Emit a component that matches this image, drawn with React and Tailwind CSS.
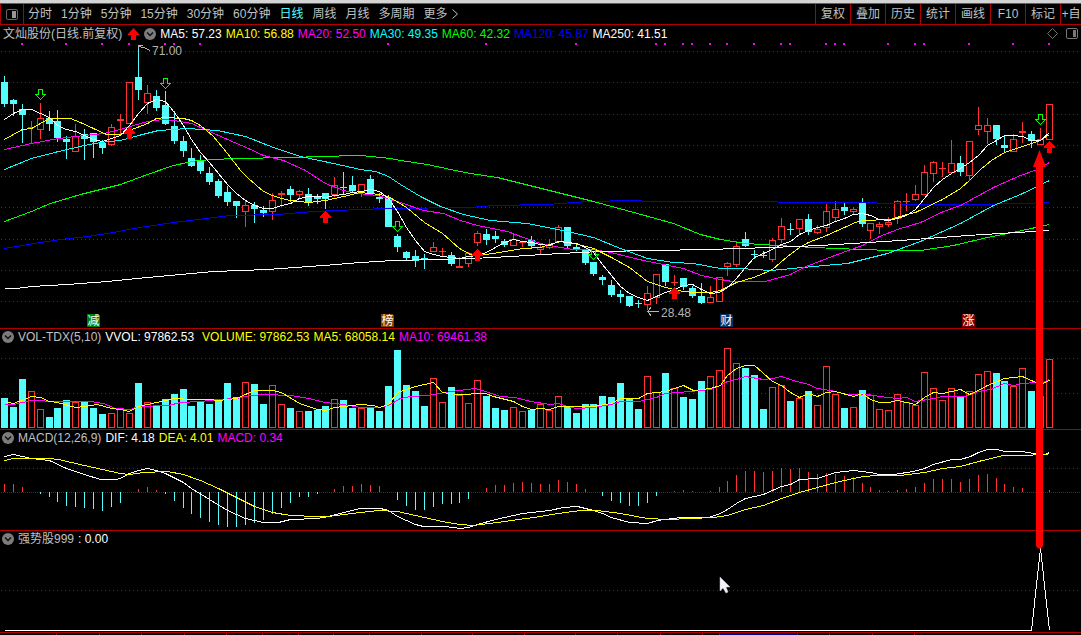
import React, { useState } from "react";
import clsx from "clsx";

const RED = "#ff3232";
const CYAN = "#54fcfc";
const GRID = "#b00000";

// x of the middle of candle i
const xAt = (i) => 4 + Math.floor(i * 8.9341 + 0.332);

// [up/down, high, body top, body bottom, low, top of the volume bar]
const candles = [
  ["d", 76, 82, 104, 107, 398],
  ["d", 99, 100, 104, 116, 407],
  ["d", 104, 109, 115, 143, 379],
  ["u", 121, 127, 128, 143, 391],
  ["u", 103, 118, 130, 139, 409],
  ["d", 111, 118, 124, 131, 417],
  ["d", 110, 121, 138, 142, 408],
  ["d", 136, 139, 142, 159, 400],
  ["u", 124, 136, 152, 152, 402],
  ["d", 129, 134, 139, 160, 402],
  ["d", 133, 133, 142, 158, 408],
  ["d", 140, 143, 148, 154, 414],
  ["u", 124, 127, 145, 146, 413],
  ["u", 114, 119, 121, 135, 408],
  ["u", 82, 82, 124, 124, 413],
  ["d", 45, 77, 90, 100, 383],
  ["u", 85, 93, 103, 114, 402],
  ["d", 90, 96, 108, 111, 405],
  ["d", 91, 105, 124, 125, 399],
  ["d", 111, 126, 141, 144, 394],
  ["d", 136, 141, 151, 157, 389],
  ["d", 148, 158, 166, 167, 406],
  ["d", 155, 160, 171, 174, 402],
  ["d", 167, 173, 182, 185, 404],
  ["d", 179, 181, 196, 198, 400],
  ["d", 186, 192, 202, 206, 383],
  ["d", 201, 201, 206, 218, 397],
  ["u", 201, 205, 212, 227, 382],
  ["d", 202, 205, 209, 223, 384],
  ["d", 206, 210, 213, 217, 404],
  ["u", 193, 200, 212, 220, 385],
  ["u", 191, 193, 195, 207, 404],
  ["d", 186, 189, 195, 202, 408],
  ["u", 190, 191, 195, 198, 411],
  ["d", 188, 194, 202, 206, 411],
  ["d", 194, 197, 199, 204, 410],
  ["d", 193, 193, 199, 209, 406],
  ["u", 177, 185, 195, 197, 399],
  ["d", 172, 187, 188, 194, 400],
  ["d", 176, 185, 191, 192, 408],
  ["u", 184, 184, 192, 197, 408],
  ["d", 175, 179, 194, 195, 408],
  ["d", 193, 197, 199, 203, 411],
  ["d", 195, 198, 227, 227, 386],
  ["d", 234, 236, 247, 252, 350],
  ["d", 251, 252, 258, 261, 385],
  ["d", 250, 256, 261, 267, 391],
  ["d", 254, 258, 259, 269, 406],
  ["u", 242, 247, 252, 252, 378],
  ["u", 248, 251, 252, 257, 402],
  ["d", 252, 255, 264, 266, 387],
  ["u", 257, 266, 268, 268, 395],
  ["u", 252, 253, 264, 267, 403],
  ["u", 231, 233, 243, 246, 380],
  ["d", 229, 234, 240, 245, 396],
  ["d", 231, 236, 239, 243, 408],
  ["d", 239, 241, 245, 247, 410],
  ["u", 234, 239, 246, 246, 407],
  ["u", 241, 242, 243, 247, 411],
  ["d", 236, 240, 246, 248, 410],
  ["u", 245, 247, 250, 254, 404],
  ["u", 239, 245, 248, 249, 410],
  ["u", 225, 227, 242, 242, 396],
  ["d", 227, 227, 246, 248, 406],
  ["d", 244, 247, 250, 251, 413],
  ["d", 249, 250, 263, 265, 404],
  ["d", 262, 262, 274, 276, 404],
  ["d", 275, 277, 280, 285, 396],
  ["d", 280, 285, 295, 297, 397],
  ["d", 290, 294, 297, 303, 383],
  ["d", 296, 296, 306, 307, 399],
  ["d", 300, 303, 304, 308, 409],
  ["u", 286, 293, 305, 310, 376],
  ["u", 274, 274, 298, 304, 392],
  ["d", 264, 264, 282, 286, 373],
  ["u", 275, 282, 283, 286, 388],
  ["d", 278, 278, 287, 290, 397],
  ["d", 286, 288, 296, 298, 399],
  ["d", 283, 296, 303, 304, 381],
  ["u", 286, 297, 303, 303, 376],
  ["u", 277, 277, 302, 302, 370],
  ["u", 262, 263, 267, 276, 348],
  ["u", 241, 246, 265, 267, 363],
  ["d", 232, 239, 246, 247, 368],
  ["d", 250, 254, 255, 259, 375],
  ["d", 251, 255, 256, 258, 409],
  ["u", 238, 240, 260, 262, 387],
  ["u", 218, 226, 240, 243, 385],
  ["d", 223, 229, 230, 235, 401],
  ["u", 219, 219, 229, 235, 398],
  ["d", 214, 219, 232, 235, 391],
  ["u", 225, 229, 233, 234, 405],
  ["u", 204, 211, 228, 232, 366],
  ["u", 201, 209, 218, 222, 394],
  ["d", 203, 207, 211, 215, 408],
  ["u", 207, 209, 212, 215, 407],
  ["d", 198, 203, 224, 227, 390],
  ["u", 223, 223, 231, 239, 395],
  ["u", 222, 224, 227, 234, 409],
  ["u", 217, 222, 225, 227, 410],
  ["u", 200, 201, 219, 224, 394],
  ["u", 193, 201, 202, 211, 402],
  ["u", 185, 194, 200, 201, 405],
  ["u", 165, 172, 195, 195, 372],
  ["u", 161, 162, 174, 182, 388],
  ["u", 162, 168, 169, 177, 400],
  ["u", 140, 163, 173, 173, 388],
  ["d", 156, 163, 172, 176, 396],
  ["u", 141, 141, 176, 181, 391],
  ["u", 107, 125, 130, 135, 374],
  ["u", 118, 125, 132, 144, 371],
  ["d", 125, 125, 139, 145, 373],
  ["d", 135, 145, 148, 152, 381],
  ["u", 134, 139, 152, 152, 386],
  ["u", 122, 131, 133, 143, 368],
  ["d", 131, 134, 141, 148, 391],
  ["u", 128, 139, 145, 145, 396],
  ["u", 104, 104, 140, 140, 359],
];

const ma5 = [
  119, 113, 109, 109, 113, 117, 125, 129, 131, 135, 139, 141, 138, 135, 125,
  113, 103, 99, 101, 112, 125, 139, 152, 162, 173, 184, 193, 200, 205, 208, 208,
  205, 203, 198, 196, 196, 197, 195, 194, 192, 191, 189, 191, 198, 211, 227,
  240, 251, 254, 256, 257, 258, 256, 255, 252, 247, 242, 239, 241, 242, 244,
  245, 241, 242, 243, 247, 252, 264, 275, 286, 293, 297, 300, 296, 292, 289,
  285, 284, 289, 293, 292, 287, 278, 267, 257, 253, 249, 244, 241, 234, 230,
  227, 225, 221, 218, 214, 213, 215, 219, 220, 218, 215, 209, 198, 187, 179,
  173, 168, 162, 155, 145, 140, 135, 135, 136, 140, 140, 132,
];

const priceLines = [
  {
    color: "#0000ff",
    points:
      "4,248 27,244 60,239 87,236 113,232 133,228 173,222 230,215 277,214 313,211 360,209 388,208 470,207 493,205 547,204 587,201 633,200 650,201 720,201 775,201 780,202 873,202 880,203 920,204 973,204 1020,203 1049,202",
  },
  {
    color: "#00ff00",
    points:
      "4,221 31,211 50,203 80,194 120,184 147,174 173,165 187,162 197,160 233,158 293,157 318,156 360,155 390,158 400,160 427,164 450,169 470,173 497,177 553,191 593,201 637,213 673,223 700,234 720,239 745,243 777,245 813,247 860,249 893,250 920,250 953,245 987,237 1017,231 1049,224",
  },
  {
    color: "#00ffff",
    points:
      "4,169 31,158 58,151 84,145 100,142 120,140 138,135 158,130 187,128 217,130 245,136 273,147 300,156 333,163 360,169 375,171 388,176 400,184 420,196 440,206 463,214 490,220 527,223 567,231 593,237 620,248 647,258 673,262 693,263 720,268 740,268 770,270 813,266 847,263 887,253 920,241 960,223 993,205 1020,194 1049,180",
  },
  {
    color: "#ff00ff",
    points:
      "4,149 31,143 58,138 75,136 103,133 120,129 133,125 147,121 163,119 174,120 191,123 207,130 227,139 248,148 263,155 283,160 305,170 325,183 343,190 357,193 377,195 400,202 423,210 443,213 460,220 477,225 507,231 523,237 540,243 560,247 573,249 593,249 610,252 643,260 683,268 701,275 720,279 732,281 765,281 772,279 790,274 803,267 837,254 862,245 879,236 897,229 920,222 943,211 960,205 993,187 1020,175 1037,169 1049,162",
  },
  {
    color: "#ffff00",
    points:
      "4,139 22,129 31,128 40,123 49,118 70,118 80,122 93,128 106,134 120,134 129,130 147,123 156,118 165,117 183,118 191,120 200,125 213,136 227,153 240,170 248,178 263,191 272,195 281,198 290,200 308,202 325,200 343,196 360,192 379,194 388,196 406,207 424,222 442,233 459,248 470,254 477,255 493,253 510,250 523,248 540,247 549,244 560,241 578,244 593,248 611,257 629,267 647,281 665,287 683,291 693,292 710,292 720,290 736,282 753,277 763,273 772,269 787,256 799,247 808,242 826,235 844,227 855,222 862,220 890,219 906,214 915,212 942,199 960,188 969,180 980,169 991,160 1004,152 1022,146 1040,140 1049,134",
  },
  {
    color: "#ffffff",
    points:
      "4,288 16,288 31,286 67,284 107,281 147,277 180,274 213,271 267,269 323,265 360,262 393,260 473,258 510,256 560,253 600,251 653,250 707,249 770,247 820,245 900,240 967,235 1049,230",
  },
  { color: "#ffffff", points: ma5.map((y, i) => `${xAt(i)},${y}`).join(" ") },
];

const volumeLines = [
  {
    color: "#ff00ff",
    points:
      "4,404 13,404 31,400 58,401 90,401 103,403 115,408 130,409 138,406 168,405 180,402 200,401 218,399 236,398 250,395 265,394 290,395 308,398 325,402 343,404 360,407 378,407 388,405 400,398 410,396 428,395 450,391 475,388 485,391 500,396 515,397 530,401 550,404 558,403 567,406 576,408 593,407 611,404 620,401 638,401 656,397 665,393 690,391 710,389 720,385 727,381 736,379 745,376 763,379 772,378 781,376 793,380 808,384 817,388 835,391 846,394 867,394 879,396 897,398 906,397 915,401 933,398 942,396 965,396 978,391 990,389 1004,383 1013,385 1022,383 1035,382 1042,382 1049,379",
  },
  {
    color: "#ffff00",
    points:
      "4,401 13,403 31,396 40,397 49,401 57,402 75,407 84,406 97,404 111,408 120,409 129,411 138,406 156,402 174,398 191,399 209,399 218,400 236,398 254,390 272,390 281,392 299,403 317,409 325,410 334,407 352,405 360,404 373,405 379,407 388,404 397,392 415,386 433,382 442,392 457,394 485,393 493,396 513,401 522,406 531,409 540,408 549,409 558,406 593,406 611,403 620,398 638,398 647,393 665,391 683,385 693,390 710,388 720,385 727,375 736,368 745,365 754,365 763,373 772,381 781,385 790,392 799,397 808,393 817,396 826,392 835,391 853,396 862,393 870,399 879,402 888,402 897,400 906,402 915,404 924,397 933,392 942,393 960,389 969,394 978,390 987,385 1004,378 1022,376 1033,381 1040,384 1049,380",
  },
];

const macdLines = [
  {
    color: "#ffffff",
    points:
      "4,456 13,454 22,456 31,458 49,460 66,468 84,474 100,479 116,479 122,477 129,473 138,470 147,468 156,470 165,473 183,482 191,488 209,499 227,510 245,518 263,522 278,522 290,519 317,518 328,516 343,512 360,508 380,508 388,510 397,516 415,524 423,526 445,526 460,528 468,527 477,524 495,519 522,513 549,510 563,507 577,506 593,510 602,513 611,517 629,522 647,523 657,520 680,517 708,517 720,513 727,509 736,503 745,498 763,494 781,486 790,484 799,479 817,478 835,472 853,470 870,472 879,474 893,474 913,471 924,468 933,464 951,459 960,459 970,456 978,452 987,449 997,449 1004,451 1022,451 1033,453 1045,454 1049,452",
  },
  {
    color: "#ffff00",
    points:
      "4,460 13,458 49,458 58,459 84,465 111,471 120,473 129,474 143,472 167,471 183,474 200,480 218,488 236,497 254,506 272,512 290,515 317,516 328,516 343,514 360,512 378,510 397,511 415,515 442,521 459,524 473,525 504,521 540,516 558,513 580,510 597,510 620,513 647,518 667,519 713,517 727,515 745,509 763,505 781,498 799,492 817,487 835,482 853,478 863,476 877,475 900,475 924,472 942,468 960,466 978,461 1003,455 1020,455 1045,454 1049,453",
  },
];

// free end of every MACD bar, 492 is the zero line
const macdBars = [
  484, 484, 487, 492, 494, 497, 502, 506, 507, 508, 509, 511, 507, 503, 492, 489,
  487, 490, 494, 501, 508, 514, 518, 522, 525, 527, 527, 525, 523, 520, 514,
  508, 503, 497, 497, 494, 492, 489, 486, 486, 484, 485, 486, 492, 500, 506,
  510, 510, 507, 504, 504, 503, 499, 492, 488, 485, 485, 483, 482, 483, 484,
  484, 480, 482, 484, 489, 492, 496, 501, 503, 506, 506, 503, 496, 492, 491,
  490, 491, 492, 491, 487, 481, 475, 471, 471, 472, 471, 468, 469, 468, 472,
  474, 473, 474, 476, 477, 483, 487, 490, 491, 490, 489, 487, 483, 479, 479,
  479, 482, 479, 475, 474, 478, 484, 487, 488, 492, 492, 490,
];

const eventDots = [
  22, 66, 102, 129, 165, 174, 200, 388, 486, 576, 656, 665, 683, 692, 710, 727,
  754, 781, 790, 826, 835, 844, 888, 915, 924, 969, 1013, 1049,
];

const buySignals = [
  [129, 127],
  [325, 211],
  [477, 249],
  [674, 287],
  [1049, 141],
];

const sellSignals = [
  [40, 89],
  [165, 78],
  [397, 221],
  [593, 249],
  [1040, 114],
];

const badges = [
  { x: 87, color: "#008000", text: "减" },
  { x: 381, color: "#804000", text: "榜" },
  { x: 720, color: "#003468", text: "财" },
  { x: 962, color: "#800000", text: "涨" },
];

const axisTicks = [
  56, 99, 141, 184, 226, 262, 298, 333, 369, 421, 472, 524, 575, 617, 660, 702,
  719, 797, 829, 872, 914,
];

const periods = [
  "分时",
  "1分钟",
  "5分钟",
  "15分钟",
  "30分钟",
  "60分钟",
  "日线",
  "周线",
  "月线",
  "多周期",
];

const tools = ["复权", "叠加", "历史", "统计", "画线", "F10", "标记"];

const GridLine = ({ y }) => (
  <line x1="1" x2="1081" y1={y + 0.5} y2={y + 0.5} stroke={GRID} strokeDasharray="1 3" />
);

const Lines = ({ lines }) => (
  <g transform="translate(.5 .5)" fill="none">
    {lines.map((line, idx) => (
      <polyline key={idx} points={line.points} stroke={line.color} />
    ))}
  </g>
);

const UpArrow = ({ x, y }) => (
  <path
    d={`M${x + 0.5} ${y}l5.5 6v1h-3v5h-5v-5h-3v-1z`}
    fill="#ff0000"
  />
);

const DownArrow = ({ x, y }) => (
  <path
    d={`M${x - 1.5} ${y + 0.5}h4v5h3l-5 5l-5 -5h3z`}
    fill="none"
    stroke="#00ff00"
  />
);

const Chart = ({ top, height, label, children }) => (
  <svg
    viewBox={`0 ${top} 1081 ${height}`}
    className="block w-full"
    shapeRendering="crispEdges"
    role="img"
    aria-label={label}
  >
    {children}
  </svg>
);

const CollapseButton = ({ label }) => (
  <button aria-label={label} className="shrink-0">
    <svg viewBox="0 0 12 12" className="block size-3">
      <circle cx="6" cy="6" r="6" fill="#7c7c7c" />
      <path d="M3 4.5l3 3 3-3" fill="none" stroke="#111" strokeWidth="1.5" />
    </svg>
  </button>
);

const Value = ({ className, children }) => (
  <span className={clsx("whitespace-pre", className)}>{children}</span>
);

const Toolbar = () => {
  const [active, setActive] = useState("日线");

  return (
    <nav className="flex h-[21px] items-stretch border-b border-[#b00000] text-[#c0c0c0]">
      <button
        aria-label="侧栏"
        className="flex w-6 shrink-0 items-center justify-center border-x border-[#b00000]"
      >
        <svg viewBox="0 0 12 11" className="h-[11px] w-3">
          <rect x=".5" y=".5" width="11" height="10" rx="1.5" fill="none" stroke="#666" />
          <rect x="6" y="2" width="4" height="7" fill="#999" />
        </svg>
      </button>
      <div className="ml-1 flex grow items-center gap-[9px]">
        {periods.map((item) => (
          <button
            key={item}
            onClick={() => setActive(item)}
            className={clsx("whitespace-nowrap", active === item && "text-[#54fcfc]")}
          >
            {item}
          </button>
        ))}
        <button className="flex items-center gap-1 whitespace-nowrap">
          更多
          <svg viewBox="0 0 6 10" className="h-2.5 w-1.5">
            <path d="M.5 .5l5 4.5-5 4.5" fill="none" stroke="#c0c0c0" />
          </svg>
        </button>
      </div>
      {tools.map((item) => (
        <button key={item} className="w-[35px] shrink-0 border-l border-[#b00000] text-center">
          {item}
        </button>
      ))}
      <button className="w-[21px] shrink-0 border-l border-[#b00000] text-center whitespace-nowrap">
        +自
      </button>
    </nav>
  );
};

const PricePanel = () => (
  <section className="border-b border-[#b00000]">
    <header className="flex h-[17px] items-center gap-1 pl-[3px]">
      <h1 className="mr-px whitespace-nowrap text-[#c0c0c0]">文灿股份(日线.前复权)</h1>
      <svg viewBox="-6 0 13 12" className="h-3 w-[13px] shrink-0">
        <UpArrow x={0} y={0} />
      </svg>
      <CollapseButton label="主图指标" />
      <Value className="text-white">MA5: 57.23</Value>
      <Value className="text-[#ffff00]">MA10: 56.88</Value>
      <Value className="text-[#ff00ff]">MA20: 52.50</Value>
      <Value className="text-[#00ffff]">MA30: 49.35</Value>
      <Value className="text-[#00ff00]">MA60: 42.32</Value>
      <Value className="text-[#0000ff]">MA120: 45.87</Value>
      <Value className="text-white">MA250: 41.51</Value>
      <div className="ml-auto flex items-center gap-2 pr-[3px]">
        <button aria-label="标注">
          <svg viewBox="0 0 11 11" className="block size-[11px]">
            <path d="M5.5 .5l5 5-5 5-5-5z" fill="none" stroke="#707070" />
          </svg>
        </button>
        <button aria-label="右侧栏">
          <svg viewBox="0 0 12 11" className="block h-[11px] w-3">
            <rect x=".5" y=".5" width="11" height="10" rx="1.5" fill="none" stroke="#777" />
            <rect x="7" y="2" width="3" height="7" fill="#777" />
          </svg>
        </button>
      </div>
    </header>
    <Chart top={42} height={286} label="日K线">
      {[51, 82, 114, 145, 176, 207, 239, 270, 301].map((y) => (
        <GridLine key={y} y={y} />
      ))}
      {eventDots.map((x) => (
        <rect key={x} x={x - 1} y="43" width="2" height="2" fill="#ff00ff" />
      ))}
      {candles.map(([dir, high, open, close, low], i) => {
        const x = xAt(i);
        const height = close - open;
        if (dir === "d" || height < 3) {
          const color = dir === "d" ? CYAN : RED;
          return (
            <g key={i} fill={color}>
              <rect x={x} y={high} width="1" height={low - high} />
              <rect x={x - 3} y={open} width="7" height={height} />
            </g>
          );
        }
        return (
          <g key={i}>
            <rect x={x} y={high} width="1" height={open - high} fill={RED} />
            <rect x={x} y={close} width="1" height={Math.max(low - close, 0)} fill={RED} />
            <rect
              x={x - 2.5}
              y={open + 0.5}
              width="6"
              height={height - 1}
              fill="#000"
              stroke={RED}
            />
          </g>
        );
      })}
      <Lines lines={priceLines} />
      {buySignals.map(([x, y]) => (
        <UpArrow key={x} x={x} y={y} />
      ))}
      {sellSignals.map(([x, y]) => (
        <DownArrow key={x} x={x} y={y} />
      ))}
      <g fill="none" stroke="#b4b4b4">
        <path d="M142.500 45.500h-4v3M138.500 46.500l5 1 7 3" />
        <path d="M659 311.500h-12M651 307.500l-3.500 4 3.500 4" />
      </g>
      <g fill="#b4b4b4" fontSize="12">
        <text x="152" y="55">71.00</text>
        <text x="661" y="317">28.48</text>
      </g>
      {badges.map((badge) => (
        <g key={badge.x}>
          <path d={`M${badge.x} 314h11l2 2v11h-13z`} fill={badge.color} />
          <text x={badge.x + 6.5} y="325" fill="#fff" fontSize="12" textAnchor="middle">
            {badge.text}
          </text>
        </g>
      ))}
    </Chart>
  </section>
);

const VolumePanel = () => (
  <section className="border-b border-[#b00000]">
    <header className="flex h-4 items-center gap-1 pl-0.5">
      <CollapseButton label="成交量指标" />
      <h2 className="text-[#c0c0c0]">VOL-TDX(5,10)</h2>
      <Value className="text-white">VVOL: 97862.53</Value>
      <Value className="ml-1 text-[#ffff00]">VOLUME: 97862.53</Value>
      <Value className="text-[#ffff00]">MA5: 68058.14</Value>
      <Value className="text-[#ff00ff]">MA10: 69461.38</Value>
    </header>
    <Chart top={345} height={84} label="成交量">
      <GridLine y={358} />
      <GridLine y={393} />
      {candles.map((candle, i) => {
        const x = xAt(i);
        const y = candle[5];
        return candle[0] === "d" ? (
          <rect key={i} x={x - 3} y={y} width="7" height={428 - y} fill={CYAN} />
        ) : (
          <rect key={i} x={x - 2.5} y={y + 0.5} width="6" height={427 - y} fill="#000" stroke={RED} />
        );
      })}
      <Lines lines={volumeLines} />
    </Chart>
  </section>
);

const MacdPanel = () => (
  <section className="border-b border-[#b00000]">
    <header className="flex h-4 items-center gap-1 pl-0.5">
      <CollapseButton label="MACD指标" />
      <h2 className="text-[#c0c0c0]">MACD(12,26,9)</h2>
      <Value className="text-white">DIF: 4.18</Value>
      <Value className="text-[#ffff00]">DEA: 4.01</Value>
      <Value className="text-[#ff00ff]">MACD: 0.34</Value>
    </header>
    <Chart top={446} height={84} label="MACD">
      <GridLine y={468} />
      <line x1="1" x2="1081" y1="492.5" y2="492.5" stroke={GRID} strokeDasharray="1 1" />
      {macdBars.map((end, i) => (
        <rect
          key={i}
          x={xAt(i)}
          y={Math.min(end, 492)}
          width="1"
          height={Math.abs(end - 492)}
          fill={end > 492 ? CYAN : RED}
        />
      ))}
      <Lines lines={macdLines} />
    </Chart>
  </section>
);

const SignalPanel = () => (
  <section className="border-b border-[#b00000]">
    <header className="flex h-4 items-center gap-1 pl-0.5">
      <CollapseButton label="强势股指标" />
      <h2 className="text-[#c0c0c0]">强势股999</h2>
      <Value className="text-white">: 0.00</Value>
    </header>
    <Chart top={547} height={85} label="强势股999">
      <GridLine y={590} />
      <Lines
        lines={[{ color: "#ffffff", points: "4,630 1031,630 1040,548 1049,630" }]}
      />
    </Chart>
  </section>
);

const App = () => {
  return (
    <div className="relative min-h-screen overflow-hidden bg-black font-['Liberation_Sans','Noto_Sans_CJK_SC',sans-serif] text-[12px] leading-4">
      <div className="h-1 border-b border-[#606060] bg-[#d4d4d4]" />
      <Toolbar />
      <main>
        <PricePanel />
        <VolumePanel />
        <MacdPanel />
        <SignalPanel />
      </main>
      <Chart top={633} height={2} label="时间轴">
        <rect x="720" y="633" width="77" height="2" fill="#000090" />
        {axisTicks.map((x) => (
          <rect key={x} x={x} y="633" width="1" height="2" fill={GRID} />
        ))}
      </Chart>

      {/* marker arrow and pointer lie over all the panels */}
      <svg
        viewBox="0 0 1081 635"
        className="pointer-events-none absolute top-0 left-0 w-full"
        aria-hidden="true"
      >
        <path d="M1039.500 150l6.500 17h-3v379q-3.500 6-7 0v-379h-3z" fill="#ff0000" />
        <path
          d="M720 577v14l3-3 3 5 2-1-2-5h4z"
          fill="#f4f4f4"
          stroke="#c8c8d8"
          strokeWidth=".5"
        />
      </svg>
    </div>
  );
};

export default App;
